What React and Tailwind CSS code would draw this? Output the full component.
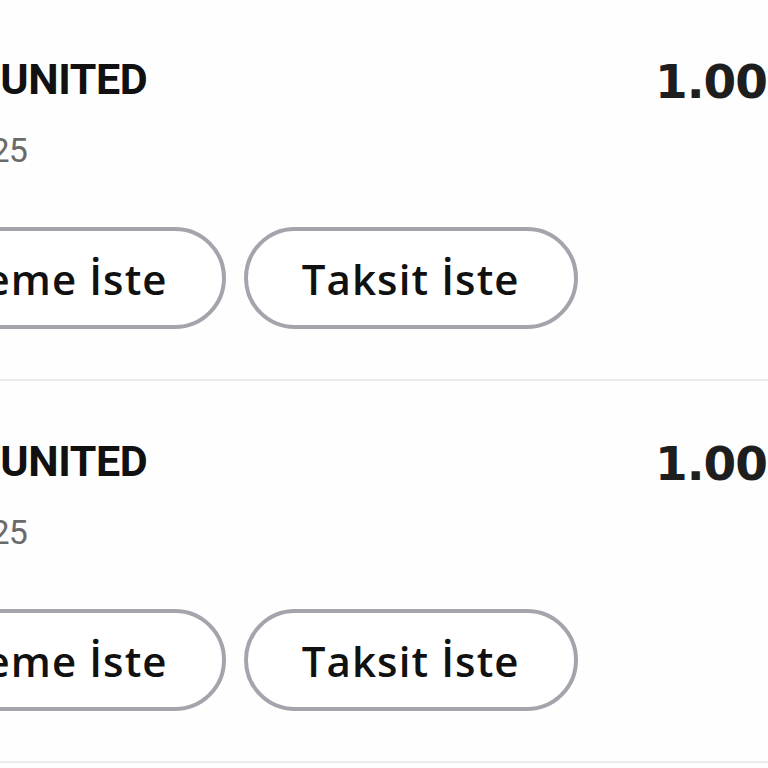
const ITEMS = [
  { id: 1, title: 'LEEDS UNITED', date: '01.12.2025', amount: '1.000,00 TL' },
  { id: 2, title: 'LEEDS UNITED', date: '01.12.2025', amount: '1.000,00 TL' },
  { id: 3, title: 'LEEDS UNITED', date: '01.12.2025', amount: '1.000,00 TL' },
];

const btn =
  'h-[102px] px-[54px] rounded-full border-[4px] border-[#a4a4ac] bg-white text-[42px] font-semibold tracking-[1.1px] text-[#111] whitespace-nowrap flex items-center justify-center';

function Row({ item }) {
  return (
    <div className="flex border-b-2 border-[#ebebeb] pt-[55px] pb-[50px]">
      {/* left side runs off the screen edge */}
      <div className="-ml-[134px] w-[789px] shrink-0 flex flex-col">
        <p className="text-[43px] leading-[50px] font-bold tracking-[-0.4px] text-[#111] whitespace-nowrap" style={{ fontFamily: 'Roboto, sans-serif' }}>
          {item.title}
        </p>
        <p className="mt-[26px] text-[34px] leading-[40px] tracking-[-1px] text-[#6a6a6a] whitespace-nowrap" style={{ fontFamily: 'Roboto, sans-serif' }}>
          {item.date}
        </p>
        <div className="mt-[57px] flex gap-[18px]">
          <button className={btn}>Ödeme İste</button>
          <button className={btn}>Taksit İste</button>
        </div>
      </div>
      <p className="mt-[2px] shrink-0 text-[47px] leading-[52px] font-bold tracking-[-1px] text-[#1e1e1e] whitespace-nowrap" style={{ fontFamily: '"DejaVu Sans", sans-serif' }}>
        {item.amount}
      </p>
    </div>
  );
}

export default function App() {
  return (
    <div className="w-[768px] h-[768px] overflow-hidden bg-[#fefefe]" style={{ fontFamily: '"Open Sans", sans-serif' }}>
      <div className="-mt-px">
        {ITEMS.map(it => <Row key={it.id} item={it} />)}
      </div>
    </div>
  );
}
